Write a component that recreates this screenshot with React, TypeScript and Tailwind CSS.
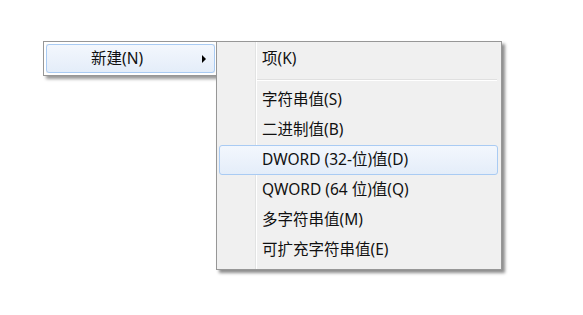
import { Fragment } from 'react';

const font = { fontFamily: '"Noto Sans", "Noto Sans CJK SC", sans-serif' };

type Item = { label: string; sep?: boolean; active?: boolean };

const items: Item[] = [
    { label: '项(K)' },
    { label: '', sep: true },
    { label: '字符串值(S)' },
    { label: '二进制值(B)' },
    { label: 'DWORD (32-位)值(D)', active: true },
    { label: 'QWORD (64 位)值(Q)' },
    { label: '多字符串值(M)' },
    { label: '可扩充字符串值(E)' },
];

const activeBox = 'border border-[#a9cbf3] rounded-[3px] bg-gradient-to-b from-[#f3f7fd] to-[#e4edf9]';

export default function App() {
    return (
        <div className="w-[583px] h-[315px] bg-white text-[15.5px] text-[#111]" style={font}>
            <div className="flex items-start pl-[43px] pt-[41px]">
                {/* parent menu */}
                <div className="w-[175px] border border-[#979797] bg-[#f0f0f0] p-[2px] shadow-[3px_3px_3px_rgba(0,0,0,0.4)] bg-[linear-gradient(to_right,#f0f0f0_41px,#e2e3e3_41px,#e2e3e3_42px,#ffffff_42px,#ffffff_43px,#f0f0f0_43px)] bg-clip-content">
                    <div className={`h-[29px] flex items-center pl-[44px] pr-[8px] ${activeBox}`}>
                        <span className="flex-1 leading-none">新建(N)</span>
                        <span className="w-0 h-0 border-y-[4px] border-y-transparent border-l-[4px] border-l-black" />
                    </div>
                </div>

                {/* submenu */}
                <div className="-ml-[2px] w-[286px] border border-[#979797] px-[2px] pt-[2px] pb-[4px] shadow-[3px_3px_3px_rgba(0,0,0,0.45)] bg-[#f0f0f0] bg-[linear-gradient(to_right,#f0f0f0_38px,#e2e3e3_38px,#e2e3e3_39px,#ffffff_39px,#ffffff_40px,#f0f0f0_40px)] bg-clip-padding">
                    {items.map((it, i) => (
                        <Fragment key={i}>
                            {it.sep ? (
                                <div className="h-[11px] flex flex-col justify-center pl-[38px] pr-[2px]">
                                    <div className="h-px bg-[#e0e0e0]" />
                                    <div className="h-px bg-white" />
                                </div>
                            ) : (
                                <div
                                    className={`h-[30px] flex items-center pl-[42px] leading-none ${it.active ? activeBox + ' mr-[1px]' : 'border border-transparent'}`}
                                >
                                    {it.label}
                                </div>
                            )}
                        </Fragment>
                    ))}
                </div>
            </div>
        </div>
    );
}
